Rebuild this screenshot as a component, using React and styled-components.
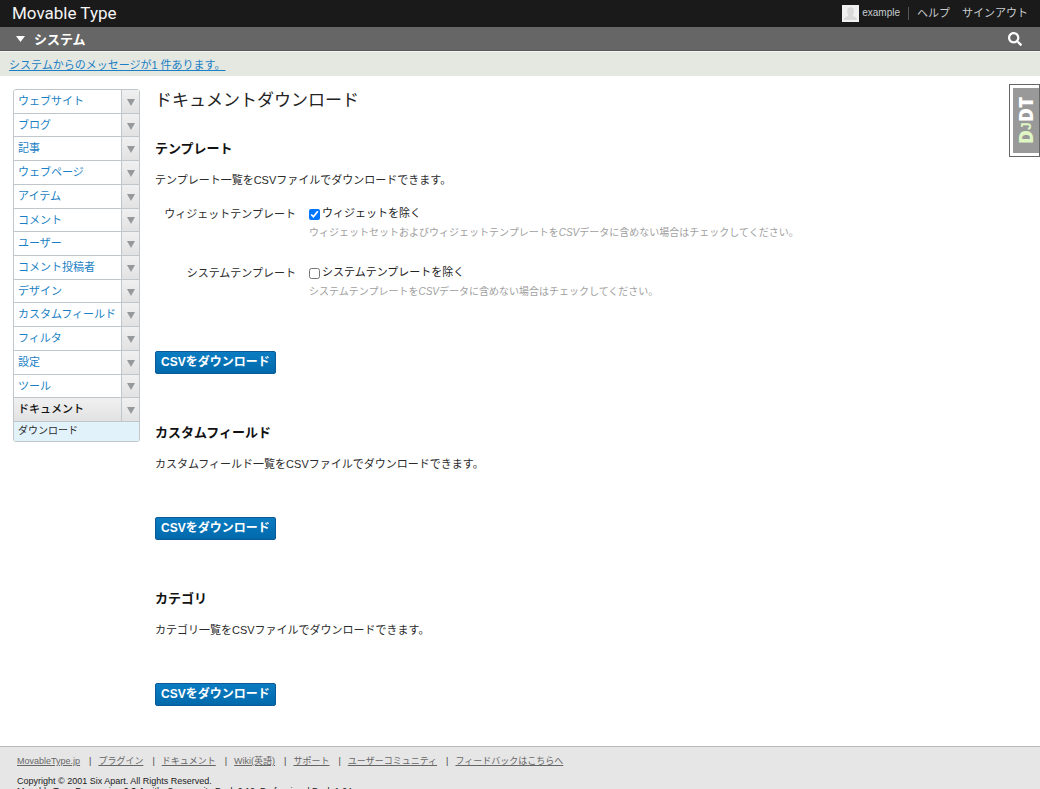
import React from "react";
import styled, { createGlobalStyle } from "styled-components";
import { FaSearch } from "react-icons/fa";

const Global = createGlobalStyle`
  * { box-sizing: border-box; }
  html { scrollbar-width: none; }
  body {
    margin: 0;
    background: #fff;
    color: #2b2b2b;
    font: 11px/16px "Liberation Sans", "Noto Sans CJK JP", sans-serif;
  }
  h1, h2, p, ul { margin: 0; padding: 0; }
  ul { list-style: none; }
`;

const Page = styled.div`
  display: flex;
  flex-direction: column;
  min-height: 100vh;
`;

const TopBar = styled.header`
  display: flex;
  flex: none;
  align-items: center;
  justify-content: space-between;
  height: 27px;
  padding: 0 12px 1px;
  background: #1a1a1a;
`;

const Brand = styled.a`
  color: #f4f4f4;
  font: 17px/24px Roboto, sans-serif;
  text-decoration: none;
`;

const Account = styled.nav`
  display: flex;
  align-items: center;
`;

const AccountLink = styled.a`
  color: #c8ccd0;
  text-decoration: none;
  margin-left: ${(p) => p.$gap || 0}px;
`;

const User = styled.a`
  display: flex;
  align-items: center;
  gap: 3px;
  padding-right: 8px;
  border-right: 1px solid #555;
  color: #c8ccd0;
  font-size: 10px;
  line-height: 12px;
  text-decoration: none;
  svg { margin: -2px 0; }
`;

const ScopeBar = styled.div`
  display: flex;
  flex: none;
  align-items: center;
  justify-content: space-between;
  height: 24px;
  padding: 0 18px 0 16px;
  background: #666;
  border-bottom: 1px solid #5a5a5a;
`;

const PlainButton = styled.button`
  display: flex;
  align-items: center;
  gap: 9px;
  padding: 0;
  border: 0;
  background: none;
  color: #fff;
  font: bold 13px/20px "Noto Sans CJK JP", sans-serif;
`;

const Notice = styled.div`
  flex: none;
  height: 25px;
  padding: 5px 9px 3px;
  border-top: 1px solid #f3f4f1;
  background: #e5e8e1;
  a { color: #1a7fc4; }
`;

const Body = styled.div`
  display: flex;
  flex: none;
  align-items: flex-start;
  gap: 15px;
  min-height: 670px;
  padding: 13px 0 40px 13px;
`;

const Sidebar = styled.nav`
  flex: none;
  width: 127px;
  border: 1px solid #c0c6c9;
  border-radius: 3px;
  overflow: hidden;
`;

const MenuList = styled.ul`
  display: grid;
  grid-auto-rows: 1fr;
  height: 332px;
`;

const MenuItem = styled.li`
  display: flex;
  border-bottom: 1px solid #c0c6c9;
  background: ${(p) => (p.$current ? "linear-gradient(#f0f0f0, #e2e2e2)" : "#fff")};
  a {
    flex: 1;
    padding: 3px 0 0 4px;
    color: ${(p) => (p.$current ? "#111" : "#1a7fc4")};
    font-weight: ${(p) => (p.$current ? 500 : 400)};
    text-decoration: none;
    white-space: nowrap;
  }
`;

const Toggle = styled.button`
  display: flex;
  align-items: center;
  justify-content: center;
  flex: none;
  width: 18px;
  padding: 2px 0 0;
  border: 0;
  border-left: 1px solid #c0c6c9;
  background: linear-gradient(#f0f0f0, #e2e2e2);
  color: #96999b;
`;

const SubLink = styled.a`
  display: block;
  height: 19px;
  padding: 1px 4px 2px;
  background: #e2f2fb;
  color: #2b2b2b;
  font-size: 10px;
  text-decoration: none;
`;

const Main = styled.main`
  flex: 1;
  min-width: 0;
`;

const Title = styled.h1`
  color: #222;
  font-size: 17px;
  font-weight: 400;
  line-height: 24px;
  margin-bottom: 26px;
`;

const Section = styled.section`
  margin-bottom: 49px;
  &:last-child { margin-bottom: 0; }
`;

const Heading = styled.h2`
  color: #111;
  font-size: 13px;
  line-height: 20px;
  margin-bottom: 13px;
`;

const Fields = styled.div`
  padding-top: 17px;
`;

const Field = styled.div`
  display: grid;
  grid-template-columns: 141px 1fr;
  column-gap: 13px;
  height: 59px;
`;

const FieldLabel = styled.span`
  padding-top: 1px;
  text-align: right;
`;

const Check = styled.label`
  display: flex;
  align-items: center;
  gap: 2px;
  color: #222;
  input { width: 11px; height: 11px; margin: 3px 0 0; }
`;

const Hint = styled.p`
  margin-top: 4px;
  color: #a0a0a0;
  font-size: 10px;
`;

const Download = styled.button`
  display: block;
  height: 23px;
  margin-top: ${(p) => p.$space}px;
  padding: 0 5px 1px;
  border: 1px solid #0b5a97;
  border-radius: 2px;
  background: linear-gradient(#0b7cc2, #0069ab);
  color: #fff;
  font: bold 12px/20px "Liberation Sans", "Noto Sans CJK JP", sans-serif;
`;

const Footer = styled.footer`
  flex: none;
  padding: 6px 17px 8px;
  border-top: 1px solid #b8b8b8;
  background: #e6e6e6;
  color: #222;
  font-size: 9px;
  line-height: 10px;
`;

const FooterLinks = styled.ul`
  display: flex;
  flex-wrap: wrap;
  margin-bottom: 7px;
  line-height: 16px;
  li + li::before { content: "|"; margin: 0 7px 0 9px; color: #444; }
  a { color: #666; }
`;

const DebugTab = styled.button`
  position: fixed;
  top: 84px;
  right: 0;
  width: 31px;
  height: 73px;
  padding: 0;
  border: 1px solid #666;
  background: #fff;
`;

const DebugFace = styled.span`
  display: flex;
  align-items: center;
  justify-content: center;
  height: 65px;
  margin: 3px 0 3px 3px;
  background: #999;
  color: #fff;
  font: 800 19px/26px "Open Sans", sans-serif;
  writing-mode: vertical-rl;
  transform: rotate(180deg);
  span { color: #dff5c4; }
  small { font: bold 14px "Liberation Sans", sans-serif; }
`;

const Caret = ({ width, height }) => (
  <svg width={width} height={height} viewBox="0 0 8 6" preserveAspectRatio="none" aria-hidden="true">
    <path d="M0 0h8L4 6z" fill="currentColor" />
  </svg>
);

const menu = [
  "ウェブサイト", "ブログ", "記事", "ウェブページ", "アイテム", "コメント", "ユーザー",
  "コメント投稿者", "デザイン", "カスタムフィールド", "フィルタ", "設定", "ツール", "ドキュメント",
];

const footerLinks = [
  "MovableType.jp", "プラグイン", "ドキュメント", "Wiki(英語)", "サポート",
  "ユーザーコミュニティ", "フィードバックはこちらへ",
];

export default function App() {
  return (
    <Page>
      <Global />
      <TopBar>
        <Brand href="#">Movable Type</Brand>
        <Account>
          <User href="#">
            <svg width="17" height="17" viewBox="0 0 17 17" aria-hidden="true">
              <path d="M0 0h17v17H0z" fill="#f0f0f0" />
              <path d="M5 6c0-5 7-5 7 0 0 2-1 3-1 5 2 1 4 1 4 4H2c0-3 2-3 4-4 0-2-1-3-1-5z" fill="#d9d9d9" />
            </svg>
            example
          </User>
          <AccountLink href="#" $gap={8}>ヘルプ</AccountLink>
          <AccountLink href="#" $gap={12}>サインアウト</AccountLink>
        </Account>
      </TopBar>
      <ScopeBar>
        <PlainButton><Caret width={9} height={6} />システム</PlainButton>
        <PlainButton aria-label="検索"><FaSearch size={14} /></PlainButton>
      </ScopeBar>
      <Notice><a href="#">システムからのメッセージが1 件あります。</a></Notice>
      <Body>
        <Sidebar>
          <MenuList>
            {menu.map((name, i) => (
              <MenuItem key={name} $current={i === menu.length - 1}>
                <a href="#">{name}</a>
                <Toggle aria-label={name}><Caret width={8} height={7} /></Toggle>
              </MenuItem>
            ))}
          </MenuList>
          <SubLink href="#">ダウンロード</SubLink>
        </Sidebar>
        <Main>
          <Title>ドキュメントダウンロード</Title>
          <Section>
            <Heading>テンプレート</Heading>
            <p>テンプレート一覧をCSVファイルでダウンロードできます。</p>
            <Fields>
              <Field>
                <FieldLabel>ウィジェットテンプレート</FieldLabel>
                <div>
                  <Check><input type="checkbox" defaultChecked />ウィジェットを除く</Check>
                  <Hint>ウィジェットセットおよびウィジェットテンプレートを<em>CSV</em>データに含めない場合はチェックしてください。</Hint>
                </div>
              </Field>
              <Field>
                <FieldLabel>システムテンプレート</FieldLabel>
                <div>
                  <Check><input type="checkbox" />システムテンプレートを除く</Check>
                  <Hint>システムテンプレートを<em>CSV</em>データに含めない場合はチェックしてください。</Hint>
                </div>
              </Field>
            </Fields>
            <Download $space={28}>CSVをダウンロード</Download>
          </Section>
          <Section>
            <Heading>カスタムフィールド</Heading>
            <p>カスタムフィールド一覧をCSVファイルでダウンロードできます。</p>
            <Download $space={45}>CSVをダウンロード</Download>
          </Section>
          <Section>
            <Heading>カテゴリ</Heading>
            <p>カテゴリ一覧をCSVファイルでダウンロードできます。</p>
            <Download $space={45}>CSVをダウンロード</Download>
          </Section>
        </Main>
      </Body>
      <Footer>
        <FooterLinks>
          {footerLinks.map((name) => <li key={name}><a href="#">{name}</a></li>)}
        </FooterLinks>
        <p>Copyright © 2001 Six Apart. All Rights Reserved.</p>
        <p>Movable Type Pro version <b>6.3.4</b> with: Community Pack 6.10, Professional Pack 1.64</p>
      </Footer>
      <DebugTab aria-label="デバッグツールバー">
        <DebugFace><span>D<small>J</small></span>DT</DebugFace>
      </DebugTab>
    </Page>
  );
}
